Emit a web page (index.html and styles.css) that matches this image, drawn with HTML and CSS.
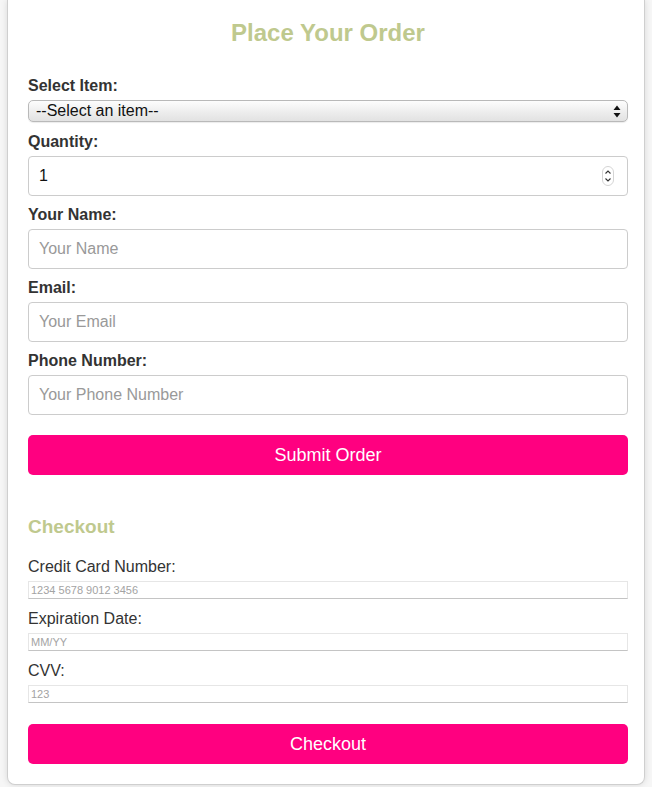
FILE: index.html
```html
<!DOCTYPE html>
<html lang="en">
<head>
<meta charset="utf-8">
<title>Place Your Order</title>
<link rel="stylesheet" href="styles.css">
</head>
<body>
<div class="card">
  <h2 class="title">Place Your Order</h2>
  <form class="order">
    <label class="lbl" for="item">Select Item:</label>
    <div class="select-wrap">
      <select id="item" class="select">
        <option>--Select an item--</option>
      </select>
      <svg class="sel-arrows" width="8" height="13" viewBox="0 0 8 13"><path d="M4 0.5 L7.5 5 L0.5 5 Z M4 12.5 L7.5 8 L0.5 8 Z" fill="#111"/></svg>
    </div>
    <label class="lbl" for="qty">Quantity:</label>
    <div class="field num-wrap">
      <input id="qty" class="num" type="number" value="1">
      <svg class="spin" width="12" height="20" viewBox="0 0 12 20"><rect x="0.5" y="0.5" width="11" height="19" rx="5.5" fill="#fff" stroke="#d4d4d4"/><path d="M3.5 7.5 L6 5 L8.5 7.5 M3.5 12.5 L6 15 L8.5 12.5" fill="none" stroke="#333" stroke-width="1.1"/></svg>
    </div>
    <label class="lbl" for="name">Your Name:</label>
    <input id="name" class="field text" type="text" placeholder="Your Name">
    <label class="lbl" for="email">Email:</label>
    <input id="email" class="field text" type="email" placeholder="Your Email">
    <label class="lbl" for="phone">Phone Number:</label>
    <input id="phone" class="field text" type="tel" placeholder="Your Phone Number">
    <button type="button" class="btn">Submit Order</button>
  </form>

  <h3 class="sub">Checkout</h3>
  <form class="checkout">
    <label class="lbl2" for="cc">Credit Card Number:</label>
    <input id="cc" class="small" type="text" placeholder="1234 5678 9012 3456">
    <label class="lbl2" for="exp">Expiration Date:</label>
    <input id="exp" class="small" type="text" placeholder="MM/YY">
    <label class="lbl2" for="cvv">CVV:</label>
    <input id="cvv" class="small" type="text" placeholder="123">
    <button type="button" class="btn btn2">Checkout</button>
  </form>
</div>
</body>
</html>
```

FILE: styles.css
```css
* { box-sizing: border-box; }
html, body { margin: 0; padding: 0; }
body {
  background: #f6f6f6;
  font-family: "Liberation Sans", Arial, Helvetica, sans-serif;
  color: #333;
  height: 787px;
  overflow: hidden;
}
.card {
  margin: 0 7px;
  background: #fff;
  border: 1px solid #cfcfcf;
  border-top: 0;
  border-radius: 0 0 8px 8px;
  box-shadow: 0 0 6px rgba(0,0,0,0.12);
  padding: 19px 16px 20px 20px;
}
.title {
  margin: 0 0 30px;
  text-align: center;
  font-size: 24px;
  line-height: 28px;
  font-weight: bold;
  color: #bfc98e;
}
.order, .checkout {
  display: flex;
  flex-direction: column;
}
.lbl {
  display: block;
  font-weight: bold;
  font-size: 16px;
  line-height: 18px;
  margin: 0 0 5px;
  color: #333;
}
.select-wrap {
  display: flex;
  align-items: center;
  height: 22px;
  margin-bottom: 11px;
  border: 1px solid #b9b9b9;
  border-radius: 5px;
  background: linear-gradient(#fdfdfd, #ececec 60%, #e2e2e2);
  box-shadow: 0 1px 1px rgba(0,0,0,0.08);
  padding: 0 6px 0 0;
}
.select {
  flex: 1;
  appearance: none;
  -webkit-appearance: none;
  border: 0;
  background: transparent;
  font-family: "Liberation Sans", Arial, sans-serif;
  font-size: 16px;
  color: #111;
  padding: 0 0 0 7px;
  height: 20px;
  line-height: 20px;
  outline: none;
}
.field {
  height: 40px;
  border: 1px solid #cccccc;
  border-radius: 4px;
  margin-bottom: 10px;
  background: #fff;
}
.text {
  width: 100%;
  padding: 0 10px;
  font-family: "Liberation Sans", Arial, sans-serif;
  font-size: 16px;
  color: #111;
  outline: none;
}
.text::placeholder { color: #999; }
.num-wrap {
  display: flex;
  align-items: center;
  padding: 0 13px 0 10px;
}
.num {
  flex: 1;
  border: 0;
  outline: none;
  font-family: "Liberation Sans", Arial, sans-serif;
  font-size: 16px;
  color: #111;
  padding: 0;
  -moz-appearance: textfield;
  appearance: textfield;
}
.num::-webkit-inner-spin-button,
.num::-webkit-outer-spin-button { -webkit-appearance: none; margin: 0; }
.btn {
  display: block;
  width: 100%;
  height: 40px;
  margin-top: 10px;
  border: 0;
  border-radius: 5px;
  background: #ff0080;
  color: #fff;
  font-family: "Liberation Sans", Arial, sans-serif;
  font-size: 18px;
  cursor: pointer;
}
.sub {
  margin: 41px 0 19px;
  font-size: 19px;
  line-height: 22px;
  font-weight: bold;
  color: #bfc98e;
}
.lbl2 {
  display: block;
  font-size: 16px;
  line-height: 19px;
  margin: 0 0 5px;
  color: #333;
}
.small {
  width: 100%;
  height: 18px;
  margin-bottom: 10px;
  padding: 0 2px;
  border: 1px solid #e6e6e6;
  border-bottom-color: #c4c4c4;
  font-family: "Liberation Sans", Arial, sans-serif;
  font-size: 11px;
  color: #111;
  outline: none;
  background: #fff;
}
.small::placeholder { color: #a3a3a3; }
.btn2 { margin-top: 11px; }
```
